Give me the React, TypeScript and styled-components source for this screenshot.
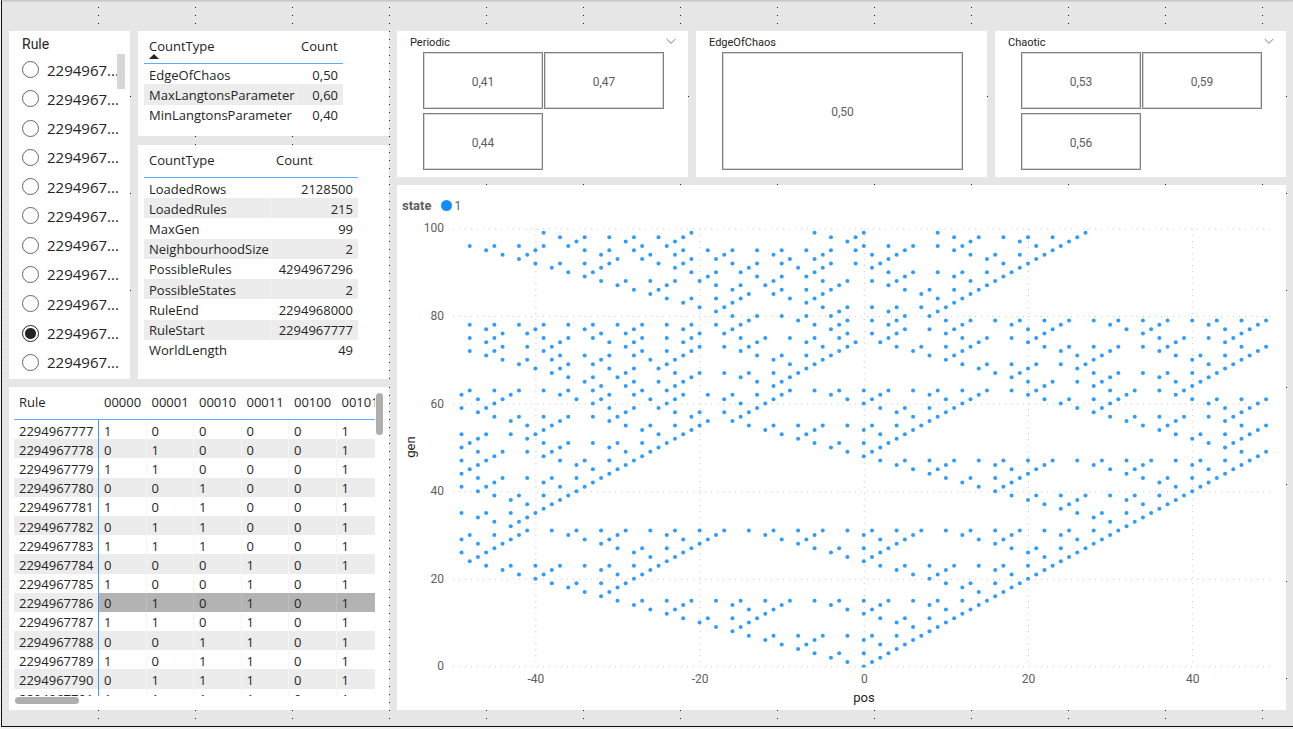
import React from "react";
import styled, { createGlobalStyle, css } from "styled-components";

const UI = '"Open Sans", "Noto Sans", sans-serif';
const DIN = 'Roboto, "Liberation Sans", sans-serif';

const GlobalStyle = createGlobalStyle`
  * { box-sizing: border-box; }
  body { margin: 0; background: #f2f2f2; color: #252423; font-family: ${UI}; }
`;

/* ---------- data ---------- */

const FIRST_RULE = 2294967777;
const SELECTED_RULE = 2294967786;
const rules = Array.from({ length: 15 }, (_, i) => FIRST_RULE + i);
const neighbourhoods = ["00000", "00001", "00010", "00011", "00100", "00101"];

const parameters: [string, string][] = [
  ["EdgeOfChaos", "0,50"],
  ["MaxLangtonsParameter", "0,60"],
  ["MinLangtonsParameter", "0,40"],
];

const statistics: [string, string][] = [
  ["LoadedRows", "2128500"],
  ["LoadedRules", "215"],
  ["MaxGen", "99"],
  ["NeighbourhoodSize", "2"],
  ["PossibleRules", "4294967296"],
  ["PossibleStates", "2"],
  ["RuleEnd", "2294968000"],
  ["RuleStart", "2294967777"],
  ["WorldLength", "49"],
];

const ruleBit = (rule: number, index: number) =>
  Math.floor(rule / 2 ** index) % 2;

/* Runs the automaton from one live cell; the world ends at +-reach. */
function simulate(rule: number, generations: number, reach: number) {
  const size = reach * 2 + 1;
  let world: number[] = Array(size).fill(0);
  world[reach] = 1;
  const live: { pos: number; gen: number }[] = [];
  for (let gen = 0; gen < generations; gen++) {
    world.forEach((v, i) => v && live.push({ pos: i - reach, gen }));
    world = world.map((_, i) => {
      let index = 0;
      for (let d = -2; d <= 2; d++) index = index * 2 + (world[i + d] || 0);
      return ruleBit(rule, index);
    });
  }
  return live;
}

/* ---------- canvas ---------- */

const Page = styled.div`
  position: relative;
  min-height: calc(100vh - 2px);
  padding: 30px 7px 15px 7px;
  background: #e6e6e6;
  border-top: 1px solid #c8c8c8;
  border-bottom: 1px solid #111;
  border-left: 1px solid #111;
  margin-left: 1px;
  box-shadow: inset 0 1px 1px #d4d4d4;
`;

const Backdrop = styled.svg`
  position: absolute;
  left: -2px;
  top: -1px;
  width: calc(100% + 2px);
  height: 100%;
`;

const Dashboard = styled.main`
  position: relative;
  display: grid;
  grid-template-columns: 380px minmax(0, 1fr);
  gap: 8px;
`;

const Column = styled.div`
  display: flex;
  flex-direction: column;
  gap: 8px;
  min-width: 0;
`;

const Row = styled.div`
  display: flex;
  gap: 8px;
`;

const TableStack = styled.div`
  flex: 1;
  display: flex;
  flex-direction: column;
  gap: 9px;
`;

const Panel = styled.section`
  position: relative;
  background: #fff;
`;

function CanvasGrid() {
  const steps = Array.from({ length: 12 }, (_, i) => Math.floor((i * 97) / 12));
  return (
    <Backdrop aria-hidden="true" shapeRendering="crispEdges">
      <defs>
        <pattern id="grid" x="98" y="96" width="97" height="97" patternUnits="userSpaceOnUse">
          {steps.map((s) => (
            <rect key={`v${s}`} x="0" y={s} width="1" height="1" fill="#222" />
          ))}
          {steps.map((s) => (
            <rect key={`h${s}`} x={s} y="0" width="1" height="1" fill="#222" />
          ))}
        </pattern>
      </defs>
      <rect width="100%" height="100%" fill="url(#grid)" />
    </Backdrop>
  );
}

/* ---------- rule slicer ---------- */

const Slicer = styled(Panel)`
  width: 121px;
  height: 348px;
  display: flex;
  flex-direction: column;
  padding: 3px 0 2px 13px;
`;

const SlicerTitle = styled.h2`
  margin: 0;
  height: 21px;
  font: 400 14px/21px ${DIN};
`;

const Options = styled.div`
  flex: 1;
  display: flex;
  flex-direction: column;
`;

const Option = styled.label`
  flex: 1;
  display: flex;
  align-items: center;
  gap: 8px;
  font-size: 15px;
  line-height: 20px;
`;

const Radio = styled.input`
  appearance: none;
  width: 17px;
  height: 17px;
  margin: 0;
  border: 1px solid #666;
  border-radius: 50%;
  background: #fff;
  &:checked {
    border-color: #252423;
    background: radial-gradient(circle, #252423 5px, #fff 6px);
  }
`;

const Thumb = styled.span<{ $soft?: boolean }>`
  position: absolute;
  background: ${(p) => (p.$soft ? "#d6d6d6" : "#b0aeac")};
  border-radius: ${(p) => (p.$soft ? 0 : 4)}px;
`;

const SlicerThumb = styled(Thumb)`
  right: 5px;
  top: 23px;
  width: 8px;
  height: 35px;
`;

const VerticalThumb = styled(Thumb)`
  right: 6px;
  top: 6px;
  width: 7px;
  height: 42px;
`;

const HorizontalThumb = styled(Thumb)`
  left: 6px;
  bottom: 6px;
  width: 64px;
  height: 7px;
`;

/* ---------- tables ---------- */

const cellText = css`
  font-size: 13px;
  font-weight: 400;
  line-height: 16px;
  white-space: nowrap;
`;

const CountTable = styled.table<{ $width: number; $height: number }>`
  width: ${(p) => p.$width}px;
  height: ${(p) => p.$height}px;
  margin-left: 6px;
  border-collapse: separate;
  border-spacing: 0;
  th, td { ${cellText} padding: 0 5px; text-align: left; }
  thead th { height: 33px; padding-bottom: 2px; border-bottom: 1px solid #5baeff; }
  tbody th { padding: 1px 0 0 5px; }
  tbody td { padding-top: 1px; text-align: right; border-left: 1px solid #f3f3f3; }
  tbody tr:nth-child(odd) td { border-left-color: #fff; }
  tbody tr:nth-child(even) { background: #ececec; }
`;

const SortButton = styled.button`
  display: flex;
  flex-direction: column;
  padding: 5px 0 0;
  border: 0;
  background: none;
  color: inherit;
  font: 400 13px/16px ${UI};
  svg { display: block; }
`;

const CountCard = styled(Panel)<{ $height: number }>`
  height: ${(p) => p.$height}px;
`;

const MatrixPanel = styled(Panel)`
  height: 323px;
  padding-left: 5px;
`;

const MatrixView = styled.div`
  width: 361px;
  height: 309px;
  overflow: hidden;
`;

const Matrix = styled.table`
  width: 370px;
  height: 321px;
  table-layout: fixed;
  border-collapse: separate;
  border-spacing: 0;
  th, td { ${cellText} padding: 2px 5px 0; text-align: left; }
  thead th { height: 33px; padding: 0 5px 2px; border-bottom: 1px solid #5baeff; }
  thead th:first-child { width: 85px; }
  tbody th { border-right: 1px solid #3b9bf5; }
  tbody td { border-right: 1px solid #f5f5f5; }
`;

const MatrixRow = styled.tr<{ $selected: boolean }>`
  &:nth-child(even) { background: #ececec; }
  ${(p) => p.$selected && css`td { background: #b3b3b3; border-right-color: #bfbfbf !important; }`}
`;

/* ---------- rule class cards ---------- */

const Cards = styled.div`
  display: grid;
  grid-template-columns: repeat(3, minmax(0, 1fr));
  gap: 8px;
`;

const ClassCard = styled(Panel)`
  height: 146px;
  padding: 4px 24px 7px 26px;
  display: flex;
  flex-direction: column;
`;

const CardHeader = styled.header`
  display: flex;
  justify-content: space-between;
  height: 17px;
  margin: 0 -12px 0 -13px;
`;

const CardTitle = styled.h2`
  margin: 0;
  font: 400 11px/15px ${DIN};
`;

const Expand = styled.button`
  padding: 0;
  border: 0;
  width: 10px;
  height: 12px;
  background: none;
  color: #7a7890;
  svg { display: block; }
`;

const Tiles = styled.div<{ $columns: number }>`
  flex: 1;
  display: grid;
  grid-template-columns: repeat(${(p) => p.$columns}, 1fr);
  grid-auto-rows: 1fr;
  gap: 4px 1px;
`;

const Tile = styled.button`
  padding: 2px 0 0;
  border: 1px solid #808080;
  box-shadow: inset 0 0 0 1px #d6d6d6;
  background: #fff;
  color: #605e5c;
  font: 400 12px/16px ${DIN};
`;

function RuleClass({ title, values, expandable }: { title: string; values: string[]; expandable?: boolean }) {
  return (
    <ClassCard>
      <CardHeader>
        <CardTitle>{title}</CardTitle>
        {expandable && (
          <Expand aria-label={`Expand ${title}`}>
            <svg width="10" height="12" viewBox="0 0 10 12" fill="none" stroke="currentColor">
              <path d="M.6 4 5 8.300 9.400 4" />
            </svg>
          </Expand>
        )}
      </CardHeader>
      <Tiles $columns={values.length > 1 ? 2 : 1}>
        {values.map((v) => (
          <Tile key={v}>{v}</Tile>
        ))}
      </Tiles>
    </ClassCard>
  );
}

/* ---------- scatter chart ---------- */

const Legend = styled.div`
  display: flex;
  align-items: center;
  gap: 2px;
  height: 32px;
  padding: 9px 0 0 5px;
  font: 400 12px/16px ${DIN};
  color: #605e5c;
  strong { font-size: 13px; font-weight: 700; margin-right: 8px; }
`;

const Swatch = styled.i`
  width: 11px;
  height: 11px;
  border-radius: 50%;
  background: #118dff;
`;

const Plot = styled.svg`
  display: block;
  width: 100%;
  height: auto;
  .tick { font: 400 12px ${DIN}; fill: #605e5c; }
  .title { font: 400 13px ${DIN}; fill: #252423; }
  .line { stroke: #c9c9c9; stroke-dasharray: 1 5; }
  .dot { fill: #118dff; fill-opacity: 0.88; }
`;

const cells = simulate(SELECTED_RULE, 100, 49);
const px = (pos: number) => 466.8 + pos * 8.21;
const py = (gen: number) => 449.400 - gen * 4.38;

function Scatter() {
  return (
    <Panel>
      <Legend>
        <strong>state</strong>
        <Swatch />
        <span>1</span>
      </Legend>
      <Plot viewBox="0 0 889 493" role="img" aria-label="Live cells by pos and gen">
        <defs>
          <clipPath id="plot"><rect x="50" y="0" width="830" height="450.5" /></clipPath>
        </defs>
        {[0, 20, 40, 60, 80, 100].map((g) => (
          <g key={g}>
            <line className="line" x1="56" x2="876" y1={py(g) + 0.5} y2={py(g) + 0.5} />
            <text className="tick" x="47" y={py(g) + 4} textAnchor="end">{g}</text>
          </g>
        ))}
        {[-40, -20, 0, 20, 40].map((p) => (
          <g key={p}>
            <line className="line" x1={px(p) + 0.5} x2={px(p) + 0.5} y1="12" y2="450" />
            <text className="tick" x={px(p) + 0.5} y="466" textAnchor="middle">{p}</text>
          </g>
        ))}
        <g clipPath="url(#plot)">
          {cells.map((c) => (
            <circle key={`${c.pos},${c.gen}`} className="dot" cx={px(c.pos)} cy={py(c.gen)} r="2" />
          ))}
        </g>
        <text className="title" x="467" y="485" textAnchor="middle">pos</text>
        <text className="title" transform="translate(18 230) rotate(-90)" textAnchor="middle">gen</text>
      </Plot>
    </Panel>
  );
}

/* ---------- page ---------- */

function Counts({ rows, width, height, sorted }: { rows: [string, string][]; width: number; height: number; sorted?: boolean }) {
  return (
    <CountTable $width={width} $height={height}>
      <thead>
        <tr>
          <th scope="col">
            {sorted ? (
              <SortButton>
                CountType
                <svg width="10" height="5" viewBox="0 0 10 5"><path d="M0 5 5 0l5 5z" fill="#252423" /></svg>
              </SortButton>
            ) : (
              "CountType"
            )}
          </th>
          <th scope="col">Count</th>
        </tr>
      </thead>
      <tbody>
        {rows.map(([name, value]) => (
          <tr key={name}>
            <th scope="row">{name}</th>
            <td>{value}</td>
          </tr>
        ))}
      </tbody>
    </CountTable>
  );
}

export default function App() {
  const [selected, setSelected] = React.useState(SELECTED_RULE);
  return (
    <>
      <GlobalStyle />
      <Page>
        <CanvasGrid />
        <Dashboard>
          <Column>
            <Row>
              <Slicer>
                <SlicerTitle>Rule</SlicerTitle>
                <Options>
                  {rules.slice(0, 11).map((r) => (
                    <Option key={r}>
                      <Radio type="radio" name="rule" checked={selected === r} onChange={() => setSelected(r)} />
                      {String(r).slice(0, 7)}...
                    </Option>
                  ))}
                </Options>
                <SlicerThumb $soft />
              </Slicer>
              <TableStack>
                <CountCard $height={105}>
                  <Counts rows={parameters} width={199} height={94} sorted />
                </CountCard>
                <CountCard $height={234}>
                  <Counts rows={statistics} width={214} height={215} />
                </CountCard>
              </TableStack>
            </Row>
            <MatrixPanel>
              <MatrixView>
                <Matrix>
                  <thead>
                    <tr>
                      <th scope="col">Rule</th>
                      {neighbourhoods.map((n) => (
                        <th key={n} scope="col">{n}</th>
                      ))}
                    </tr>
                  </thead>
                  <tbody>
                    {rules.map((r) => (
                      <MatrixRow key={r} $selected={r === selected}>
                        <th scope="row">{r}</th>
                        {neighbourhoods.map((n, i) => (
                          <td key={n}>{ruleBit(r, i)}</td>
                        ))}
                      </MatrixRow>
                    ))}
                  </tbody>
                </Matrix>
              </MatrixView>
              <VerticalThumb />
              <HorizontalThumb />
            </MatrixPanel>
          </Column>
          <Column>
            <Cards>
              <RuleClass title="Periodic" values={["0,41", "0,47", "0,44"]} expandable />
              <RuleClass title="EdgeOfChaos" values={["0,50"]} />
              <RuleClass title="Chaotic" values={["0,53", "0,59", "0,56"]} expandable />
            </Cards>
            <Scatter />
          </Column>
        </Dashboard>
      </Page>
    </>
  );
}
